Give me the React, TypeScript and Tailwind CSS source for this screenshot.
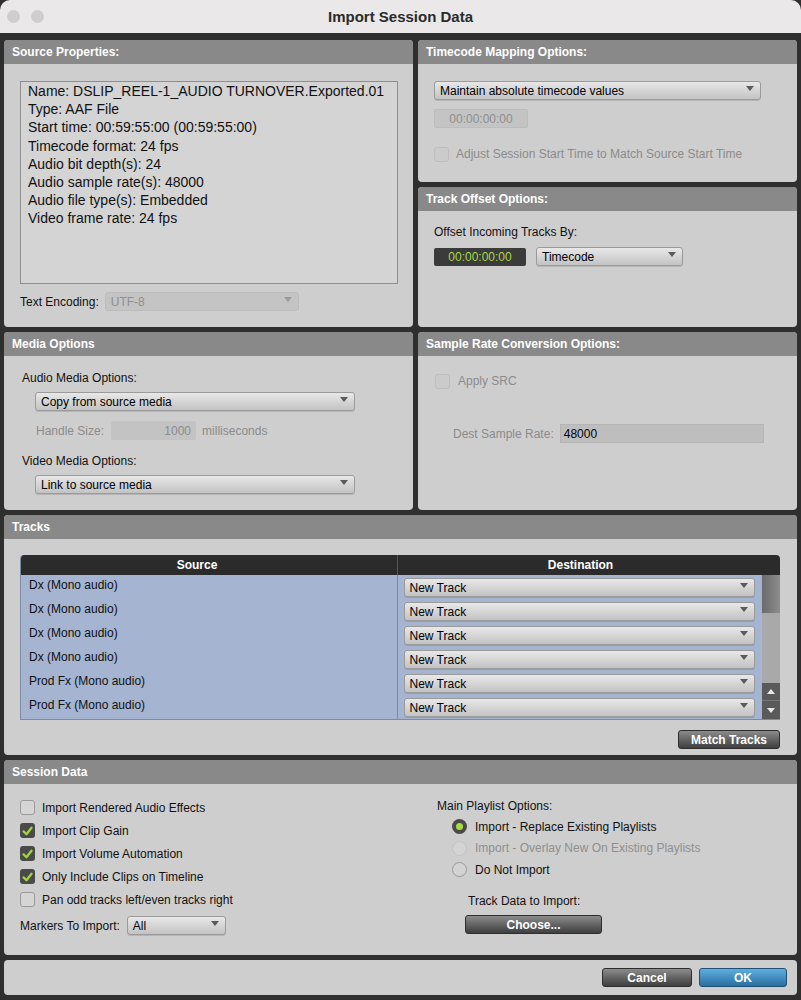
import React from "react";

type SelectProps = {
  value: string;
  className?: string;
  disabled?: boolean;
};

const Arrow = ({ light }: { light?: boolean }) => (
  <svg width="8" height="5" viewBox="0 0 8 5" className="shrink-0">
    <path d="M0 0h8L4 5z" fill={light ? "#9a9a9a" : "#5a5a5a"} />
  </svg>
);

function Select({ value, className = "", disabled }: SelectProps) {
  return (
    <div
      className={`flex h-[19px] items-center justify-between rounded-[3px] border pl-[5px] pr-[6px] text-[12px] ${
        disabled
          ? "border-[#bdbdbd] bg-[#c4c4c4] text-[#8f8f8f]"
          : "border-[#9b9b9b] bg-linear-to-b from-[#e8e8e8] to-[#c3c3c3] text-black shadow-[0_1px_0_rgba(0,0,0,0.12)]"
      } ${className}`}
    >
      <span className="leading-[14px]">{value}</span>
      <span className="-mt-[5px]">
        <Arrow light={disabled} />
      </span>
    </div>
  );
}

function Check({ checked, disabled }: { checked?: boolean; disabled?: boolean }) {
  if (checked) {
    return (
      <div className="flex h-[15px] w-[15px] shrink-0 items-center justify-center rounded-[3px] bg-[#4a4a4a]">
        <svg width="11" height="10" viewBox="0 0 11 10">
          <path
            d="M1.6 5.4l2.9 2.9 5-6.6"
            stroke="#9fd43c"
            strokeWidth="2.3"
            fill="none"
            strokeLinecap="round"
            strokeLinejoin="round"
          />
        </svg>
      </div>
    );
  }
  return (
    <div
      className={`h-[15px] w-[15px] shrink-0 rounded-[3px] border ${
        disabled ? "border-[#bdbdbd] bg-[#cbcbcb]" : "border-[#9a9a9a] bg-[#d5d5d5]"
      }`}
    />
  );
}

function Radio({ on, disabled }: { on?: boolean; disabled?: boolean }) {
  if (on) {
    return (
      <div className="flex h-[15px] w-[15px] shrink-0 items-center justify-center rounded-full bg-[#4a4a4a]">
        <div className="h-[7px] w-[7px] rounded-full bg-[#a6dc3c]" />
      </div>
    );
  }
  return (
    <div
      className={`h-[15px] w-[15px] shrink-0 rounded-full border bg-[#d3d3d3] ${
        disabled ? "border-[#c3c3c3]" : "border-[#9a9a9a]"
      }`}
    />
  );
}

function DarkButton({ label, className = "" }: { label: string; className?: string }) {
  return (
    <div
      className={`flex h-[19px] items-center justify-center rounded-[3px] border border-[#2d2d2d] bg-linear-to-b from-[#8c8c8c] to-[#3f3f3f] text-[12px] font-bold text-white ${className}`}
    >
      {label}
    </div>
  );
}

function Panel({
  title,
  className = "",
  bodyClass = "",
  children,
}: {
  title: string;
  className?: string;
  bodyClass?: string;
  children?: React.ReactNode;
}) {
  return (
    <div className={`flex flex-col overflow-hidden rounded-[4px] bg-[#cecece] ${className}`}>
      <div className="flex h-[24px] shrink-0 items-center bg-[#898989] px-[8px] text-[12px] font-bold text-white">
        {title}
      </div>
      <div className={`flex-1 ${bodyClass}`}>{children}</div>
    </div>
  );
}

const sourceLines = [
  "Name: DSLIP_REEL-1_AUDIO TURNOVER.Exported.01",
  "Type: AAF File",
  "Start time: 00:59:55:00 (00:59:55:00)",
  "Timecode format: 24 fps",
  "Audio bit depth(s): 24",
  "Audio sample rate(s): 48000",
  "Audio file type(s): Embedded",
  "Video frame rate: 24 fps",
];

const tracks = [
  "Dx (Mono audio)",
  "Dx (Mono audio)",
  "Dx (Mono audio)",
  "Dx (Mono audio)",
  "Prod Fx (Mono audio)",
  "Prod Fx (Mono audio)",
];

const sessionChecks = [
  { label: "Import Rendered Audio Effects", checked: false },
  { label: "Import Clip Gain", checked: true },
  { label: "Import Volume Automation", checked: true },
  { label: "Only Include Clips on Timeline", checked: true },
  { label: "Pan odd tracks left/even tracks right", checked: false },
];

export default function App() {
  return (
    <div className="flex h-[1000px] w-[801px] flex-col bg-[#2f2f2f] font-['Liberation_Sans',Arial,sans-serif] text-[12px] text-[#111]">
      {/* title bar */}
      <div className="grid h-[33px] shrink-0 grid-cols-[1fr_auto_1fr] items-center rounded-t-[10px] bg-[#eae8e9]">
        <div className="flex gap-[11px] pl-[7px]">
          <div className="h-[13px] w-[13px] rounded-full bg-[#cfcdce]" />
          <div className="h-[13px] w-[13px] rounded-full bg-[#cfcdce]" />
        </div>
        <div className="pt-[1px] text-[15px] font-bold text-[#2b2b2b]">Import Session Data</div>
        <div />
      </div>

      <div className="flex flex-1 flex-col gap-[5px] px-[4px] pb-[5px] pt-[7px]">
        {/* row 1 */}
        <div className="flex h-[287px] gap-[5px]">
          <Panel title="Source Properties:" className="w-[409px]" bodyClass="px-[16px] pt-[17px]">
            <div className="h-[203px] w-[378px] border border-[#8e8e8e] bg-[#d4d4d4] px-[7px] text-[14px] leading-[18.2px] text-[#111]">
              {sourceLines.map((l, i) => (
                <div key={i}>{l}</div>
              ))}
            </div>
            <div className="mt-[8px] flex items-center gap-[6px]">
              <span>Text Encoding:</span>
              <Select value="UTF-8" disabled className="w-[194px]" />
            </div>
          </Panel>

          <div className="flex w-[379px] flex-col gap-[5px]">
            <Panel title="Timecode Mapping Options:" className="h-[142px]" bodyClass="pl-[16px] pt-[17px]">
              <Select value="Maintain absolute timecode values" className="w-[327px]" />
              <div className="mt-[9px] flex h-[19px] w-[94px] items-center justify-center rounded-[2px] border border-[#bdbdbd] bg-[#c4c4c4] text-[#8e8e8e]">
                00:00:00:00
              </div>
              <div className="mt-[17px] flex items-center gap-[7px]">
                <Check disabled />
                <span className="text-[#8b8b8b]">Adjust Session Start Time to Match Source Start Time</span>
              </div>
            </Panel>
            <Panel title="Track Offset Options:" className="flex-1" bodyClass="pl-[16px] pt-[14px]">
              <div className="leading-[14px]">Offset Incoming Tracks By:</div>
              <div className="mt-[8px] flex items-center gap-[10px]">
                <div className="flex h-[18px] w-[92px] items-center justify-center rounded-[2px] bg-[#3b3b3b] text-[#a6d84a]">
                  00:00:00:00
                </div>
                <Select value="Timecode" className="w-[147px]" />
              </div>
            </Panel>
          </div>
        </div>

        {/* row 2 */}
        <div className="flex h-[178px] gap-[5px]">
          <Panel title="Media Options" className="w-[409px]" bodyClass="pl-[18px] pt-[15px]">
            <div className="leading-[14px]">Audio Media Options:</div>
            <Select value="Copy from source media" className="ml-[13px] mt-[7px] w-[320px]" />
            <div className="ml-[14px] mt-[10px] flex items-center text-[#8b8b8b]">
              <span>Handle Size:</span>
              <div className="ml-[7px] flex h-[19px] w-[85px] items-center justify-end rounded-[2px] bg-[#c3c3c3] pr-[5px]">
                1000
              </div>
              <span className="ml-[6px]">milliseconds</span>
            </div>
            <div className="mt-[14px] leading-[14px]">Video Media Options:</div>
            <Select value="Link to source media" className="ml-[13px] mt-[7px] w-[320px]" />
          </Panel>
          <Panel title="Sample Rate Conversion Options:" className="w-[379px]" bodyClass="pl-[17px] pt-[16px]">
            <div className="flex items-center gap-[8px]">
              <Check disabled />
              <span className="text-[#8b8b8b]">Apply SRC</span>
            </div>
            <div className="ml-[18px] mt-[34px] flex items-center gap-[6px]">
              <span className="text-[#8b8b8b]">Dest Sample Rate:</span>
              <div className="flex h-[19px] w-[204px] items-center border border-[#b5b5b5] bg-[#bebebe] pl-[3px] text-black">
                48000
              </div>
            </div>
          </Panel>
        </div>

        {/* tracks */}
        <Panel title="Tracks" className="h-[240px]" bodyClass="flex flex-col pl-[16px] pr-[17px] pt-[16px]">
          <div className="w-[760px] overflow-hidden rounded-t-[4px] border-b border-l border-[#7d8aa6]">
            <div className="grid h-[20px] grid-cols-[377px_365px_18px] bg-[#2b2b2b] text-[12px] font-bold text-white">
              <div className="flex items-center justify-center border-r border-[#555] pr-[24px]">Source</div>
              <div className="flex items-center justify-center">Destination</div>
              <div />
            </div>
            <div className="flex">
              <div className="w-[377px] border-r border-[#7d8aa6] bg-[#a4b4d1]">
                {tracks.map((t, i) => (
                  <div key={i} className="h-[24px] pl-[8px] pt-[3px] leading-[14px]">
                    {t}
                  </div>
                ))}
              </div>
              <div className="w-[365px] bg-[#a4b4d1]">
                {tracks.map((_, i) => (
                  <div key={i} className="h-[24px] pl-[6px] pr-[7px] pt-[3px]">
                    <Select value="New Track" className="h-[18px]" />
                  </div>
                ))}
              </div>
              <div className="flex w-[18px] flex-col bg-[#a9a9a9]">
                <div className="h-[38px] bg-linear-to-r from-[#6a6a6a] to-[#8e8e8e]" />
                <div className="flex-1" />
                <div className="flex h-[18px] items-center justify-center border-b border-[#777] bg-[#5a5a5a]">
                  <svg width="8" height="5" viewBox="0 0 8 5">
                    <path d="M0 5h8L4 0z" fill="#e8e8e8" />
                  </svg>
                </div>
                <div className="flex h-[18px] items-center justify-center bg-[#5a5a5a]">
                  <svg width="8" height="5" viewBox="0 0 8 5">
                    <path d="M0 0h8L4 5z" fill="#e8e8e8" />
                  </svg>
                </div>
              </div>
            </div>
          </div>
          <DarkButton label="Match Tracks" className="mt-[10px] w-[102px] self-end" />
        </Panel>

        {/* session data */}
        <Panel title="Session Data" className="h-[195px]" bodyClass="flex">
          <div className="w-[433px] pl-[16px] pt-[12px]">
            {sessionChecks.map((c) => (
              <div key={c.label} className="flex h-[23px] items-center gap-[7px]">
                <Check checked={c.checked} />
                <span>{c.label}</span>
              </div>
            ))}
            <div className="mt-[5px] flex items-center gap-[7px]">
              <span>Markers To Import:</span>
              <Select value="All" className="w-[99px]" />
            </div>
          </div>
          <div className="pt-[15px]">
            <div className="leading-[14px]">Main Playlist Options:</div>
            <div className="ml-[15px] mt-[3px]">
              <div className="flex h-[21px] items-center gap-[8px]">
                <Radio on />
                <span>Import - Replace Existing Playlists</span>
              </div>
              <div className="flex h-[22px] items-center gap-[8px]">
                <Radio disabled />
                <span className="text-[#8f8f8f]">Import - Overlay New On Existing Playlists</span>
              </div>
              <div className="flex h-[21px] items-center gap-[8px]">
                <Radio />
                <span>Do Not Import</span>
              </div>
            </div>
            <div className="ml-[31px] mt-[14px] leading-[14px]">Track Data to Import:</div>
            <DarkButton label="Choose..." className="ml-[28px] mt-[7px] w-[137px]" />
          </div>
        </Panel>

        {/* bottom bar */}
        <div className="flex h-[35px] items-center justify-end gap-[7px] rounded-[4px] bg-[#cecece] pr-[10px]">
          <DarkButton label="Cancel" className="w-[90px]" />
          <div className="flex h-[19px] w-[88px] items-center justify-center rounded-[3px] border border-[#1f4f73] bg-linear-to-b from-[#5eaee0] to-[#2a6f9f] text-[12px] font-bold text-white">
            OK
          </div>
        </div>
      </div>
    </div>
  );
}
